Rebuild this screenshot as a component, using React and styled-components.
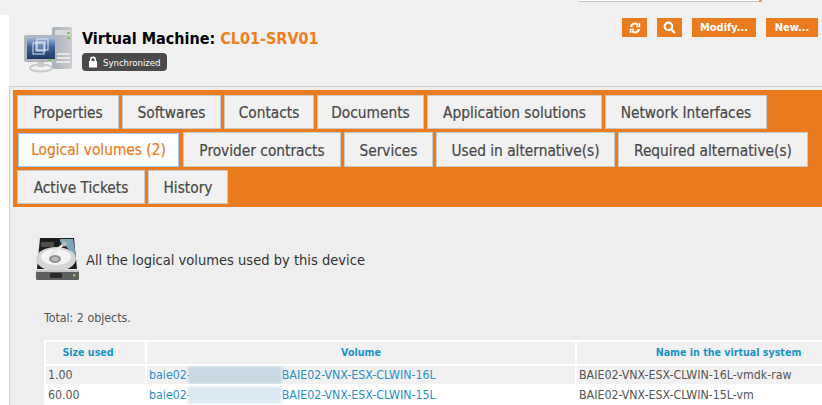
import React from "react";
import styled, { createGlobalStyle } from "styled-components";

const FONT = `"DejaVu Sans Condensed", "DejaVu Sans", sans-serif`;
const ORANGE = "#ea7c1f";

const Global = createGlobalStyle`
  html, body { margin: 0; padding: 0; width: 822px; height: 405px; overflow: hidden; background: #fff; }
  body { font-family: ${FONT}; color: #333; }
`;
const Page = styled.div` width: 822px; height: 405px; overflow: hidden; background: #fff; `;
const TopBand = styled.div` height: 15px; background: #f1f1f1; display: flex; align-items: flex-start; padding-left: 578px; box-sizing: border-box; `;
const TopRule = styled.div` width: 181px; height: 2px; box-sizing: border-box; background: #fff; border-bottom: 1px solid #c6c6c6; border-bottom-left-radius: 2px; `;
const TopTick = styled.div` width: 3px; height: 2px; background: ${ORANGE}; opacity: 0.7; `;
const Main = styled.main` margin-left: 9px; height: 390px; background: #f1f1f1; `;
const Head = styled.header`
  height: 71px; box-sizing: border-box; display: flex; justify-content: space-between; padding: 3px 4px 0 15px;
`;
const Left = styled.div` display: flex; gap: 8px; padding-top: 9px; `;
const Titles = styled.div` display: flex; flex-direction: column; gap: 4px; padding-top: 2px; `;
const H1 = styled.h1` margin: 0; font: 700 16px/20px ${FONT}; color: #000; white-space: nowrap; `;
const Accent = styled.span` color: #ee7f1e; `;
const Badge = styled.span`
  display: inline-flex; align-items: center; gap: 5px; width: 85px; height: 18px; box-sizing: border-box;
  padding-left: 6px; border-radius: 4px; background: #4a4a4a; color: #fff; font-size: 9.5px; white-space: nowrap;
`;
const Actions = styled.div` display: flex; gap: 10px; `;
const Action = styled.button`
  height: 19px; border: 0; padding: 0; background: ${ORANGE}; color: #fff; font: 700 11px ${FONT};
  display: flex; align-items: center; justify-content: center; width: ${p => p.$w}px;
`;
const Content = styled.section`
  height: 319px; border-top: 1px solid #cfcfcf; border-left: 1px solid #cfcfcf; background: #eeeeee; padding: 3px 0 0 3px;
`;
const TabsBar = styled.nav`
  height: 117px; box-sizing: border-box; padding: 5px 0 0 4px; background: ${ORANGE};
  display: flex; flex-direction: column; gap: 3px;
`;
const TabRow = styled.div` display: flex; gap: 3px; height: ${p => p.$h}px; `;
const Tab = styled.a`
  box-sizing: border-box; background: #f1f1f1; border: 1px solid #c9c9c9; color: #484848; padding-top: 2px;
  font-size: 15.3px; -webkit-text-stroke: 0.2px #484848; display: flex; align-items: center; justify-content: center;
  width: ${p => p.$w}px; white-space: nowrap;
`;
const ActiveTab = styled(Tab)`
  margin: 1px 1px 0 1px; padding-top: 0; background: #fff; border-color: #a5c6fb; color: ${ORANGE}; -webkit-text-stroke: 0.2px ${ORANGE};
`;
const Intro = styled.div`
  display: flex; align-items: center; gap: 7px; padding: 31px 0 0 23px; font-size: 14.55px; color: #333;
`;
const Total = styled.p` margin: 29px 0 0 31px; font-size: 12.3px; line-height: 16px; color: #555; `;
const Table = styled.table`
  margin: 14px 0 0 31px; border-collapse: separate; border-spacing: 2px; background: #fff; table-layout: fixed; width: 838px;
`;
const Th = styled.th`
  box-sizing: border-box; background: #f1f1f1; height: 22px; padding: 0 ${p => p.$pr || 0}px 2px 0; color: #1c94c4; font: 700 10.6px ${FONT}; width: ${p => p.$w}px;
`;
const Td = styled.td`
  background: ${p => p.$odd ? "#f1f1f1" : "#fff"}; height: 18px; padding: 0 0 0 2px; font-size: 12.3px; line-height: 18px; color: #555; white-space: nowrap; overflow: hidden;
`;
const Link = styled.a` color: #2c8fc4; display: flex; align-items: center; `;
const Blur = styled.span`
  display: inline-block; width: 94px; height: 18px; margin-left: -3px; background: ${p => p.$odd ? "#c8d9e4" : "#dbe9f2"}; filter: blur(1.5px);
`;

const Server = () => (
  <svg width="50" height="46" viewBox="0 0 50 46">
    <defs>
      <linearGradient id="sc" x1="0" y1="0" x2="0" y2="1"><stop offset="0" stopColor="#aebfdd" /><stop offset="0.45" stopColor="#3e6499" /><stop offset="1" stopColor="#1f3a68" /></linearGradient>
      <linearGradient id="tw" x1="0" y1="0" x2="1" y2="0"><stop offset="0" stopColor="#a9afb6" /><stop offset="1" stopColor="#c9ccd0" /></linearGradient>
    </defs>
    <rect x="28" y="0" width="20" height="42" rx="2" fill="url(#tw)" />
    <rect x="31" y="3" width="16" height="5" fill="#d8dbde" />
    <rect x="32" y="26" width="14" height="2" fill="#e6e7e9" />
    <rect x="32" y="30" width="14" height="2" fill="#e6e7e9" />
    <rect x="32" y="34" width="14" height="2" fill="#e6e7e9" />
    <rect x="43" y="5" width="3" height="2" fill="#6fd04f" />
    <rect x="43" y="10" width="3" height="2" fill="#6fd04f" />
    <rect x="0" y="8" width="33" height="27" rx="2" fill="#b3b6ba" />
    <rect x="3" y="10" width="28" height="22" fill="url(#sc)" />
    <rect x="9" y="16" width="11" height="11" fill="none" stroke="#dfe8f5" />
    <rect x="13" y="12" width="11" height="11" fill="none" stroke="#dfe8f5" />
    <rect x="12" y="15" width="9" height="9" fill="#fff" fillOpacity="0.2" stroke="#dfe8f5" />
    <rect x="24" y="32" width="4" height="1.5" fill="#6fd04f" />
    <rect x="14" y="35" width="6" height="5" fill="#c3c5c8" />
    <ellipse cx="17" cy="41" rx="11" ry="3.5" fill="none" stroke="#c8cacc" strokeWidth="2" />
  </svg>
);
const Disk = () => (
  <svg width="43" height="43" viewBox="0 0 43 43">
    <path d="M4 0h34l3 31H1z" fill="#1d1d1d" />
    <path d="M24 1h13l3 17-3 1c-3-7-7-12-13-15z" fill="#7ba7b7" />
    <rect x="5" y="4" width="13" height="5" rx="1" fill="#4d4d4d" />
    <ellipse cx="20" cy="21" rx="20" ry="12" fill="#d6d6d6" />
    <ellipse cx="20" cy="19" rx="15" ry="8" fill="#f4f4f4" />
    <ellipse cx="19" cy="21" rx="6" ry="4" fill="#8e8e8e" />
    <ellipse cx="19" cy="21" rx="3.5" ry="2.2" fill="#bbb" />
    <path d="M14 17L28 6" stroke="#e8e8e8" strokeWidth="2.5" />
    <circle cx="28" cy="6" r="2.5" fill="#bbb" />
    <rect x="0" y="32" width="43" height="10" rx="1.5" fill="#5f5f5f" />
    <rect x="0" y="32" width="43" height="2" fill="#c6c6c6" />
    <rect x="14" y="35" width="12" height="5" fill="#2b2b2b" />
    <rect x="37" y="36" width="2.5" height="2.5" fill="#6fd04f" />
  </svg>
);
const Lock = () => (
  <svg width="10" height="12" viewBox="0 0 10 12"><path d="M2 5V3.5a3 3 0 0 1 6 0V5h1v6.5H1V5zM3.5 5h3V3.5a1.5 1.5 0 0 0-3 0z" fill="#fff" fillRule="evenodd" /></svg>
);
const Refresh = () => (
  <svg width="12" height="12" viewBox="0 0 12 12" fill="none" stroke="#fff" strokeWidth="2"><path d="M2 5a4 4 0 0 1 7-2" /><path d="M10 7a4 4 0 0 1-7 2" /><path d="M10.5 1v3.5H7M1.5 11V7.5H5" strokeWidth="1.4" /></svg>
);
const Search = () => (
  <svg width="13" height="13" viewBox="0 0 12 12" fill="none" stroke="#fff" strokeWidth="2"><circle cx="5" cy="5" r="3.5" /><path d="M8 8l3 3" /></svg>
);

const row1 = [["Properties",102],["Softwares",99],["Contacts",90],["Documents",107],["Application solutions",175],["Network Interfaces",162]];
const row2 = [["Provider contracts",158],["Services",89],["Used in alternative(s)",179],["Required alternative(s)",190]];
const row3 = [["Active Tickets",128],["History",80]];

export default function App() {
  return (
    <Page>
      <Global />
      <TopBand><TopRule /><TopTick /></TopBand>
      <Main>
        <Head>
          <Left>
            <Server />
            <Titles>
              <H1>Virtual Machine: <Accent>CL01-SRV01</Accent></H1>
              <div><Badge><Lock />Synchronized</Badge></div>
            </Titles>
          </Left>
          <Actions>
            <Action $w={25}><Refresh /></Action>
            <Action $w={25}><Search /></Action>
            <Action $w={64}>Modify...</Action>
            <Action $w={52}>New...</Action>
          </Actions>
        </Head>
        <Content>
          <TabsBar>
            <TabRow $h={34}>{row1.map(([t, w]) => <Tab key={t} $w={w}>{t}</Tab>)}</TabRow>
            <TabRow $h={35}>
              <ActiveTab $w={161}>Logical volumes (2)</ActiveTab>
              {row2.map(([t, w]) => <Tab key={t} $w={w}>{t}</Tab>)}
            </TabRow>
            <TabRow $h={34}>{row3.map(([t, w]) => <Tab key={t} $w={w}>{t}</Tab>)}</TabRow>
          </TabsBar>
          <Intro><Disk />All the logical volumes used by this device</Intro>
          <Total>Total: 2 objects.</Total>
          <Table>
            <thead><tr><Th $w={99} $pr={15}>Size used</Th><Th $w={428}>Volume</Th><Th $w={303}>Name in the virtual system</Th></tr></thead>
            <tbody>
              <tr><Td $odd>1.00</Td><Td $odd><Link>baie02-<Blur $odd />BAIE02-VNX-ESX-CLWIN-16L</Link></Td><Td $odd>BAIE02-VNX-ESX-CLWIN-16L-vmdk-raw</Td></tr>
              <tr><Td>60.00</Td><Td><Link>baie02-<Blur />BAIE02-VNX-ESX-CLWIN-15L</Link></Td><Td>BAIE02-VNX-ESX-CLWIN-15L-vm</Td></tr>
            </tbody>
          </Table>
        </Content>
      </Main>
    </Page>
  );
}
